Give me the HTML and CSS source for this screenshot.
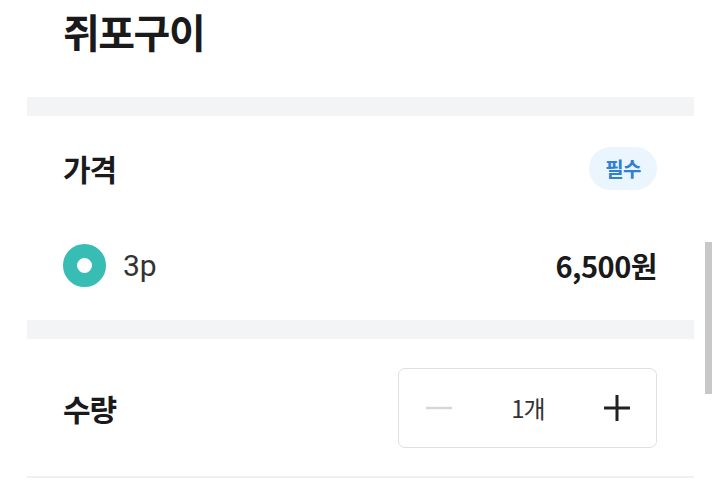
FILE: index.html
```html
<!DOCTYPE html>
<html lang="ko">
<head>
<meta charset="utf-8">
<link rel="stylesheet" href="styles.css">
</head>
<body>
<div class="page">
  <section class="title-section">
    <h1 class="title">쥐포구이</h1>
  </section>
  <div class="band"></div>
  <section class="price-section">
    <div class="row header-row">
      <h2 class="label">가격</h2>
      <span class="pill">필수</span>
    </div>
    <div class="row option-row">
      <div class="option">
        <span class="radio"></span>
        <span class="option-name">3p</span>
      </div>
      <span class="price">6,500원</span>
    </div>
  </section>
  <div class="band"></div>
  <section class="qty-section">
    <div class="row qty-row">
      <h2 class="label">수량</h2>
      <div class="stepper">
        <span class="step minus"><svg width="28" height="28" viewBox="0 0 28 28"><path d="M1 14h26" stroke="#d6d6d6" stroke-width="2.4"/></svg></span>
        <span class="count">1개</span>
        <span class="step plus"><svg width="28" height="28" viewBox="0 0 28 28"><path d="M1 14h26M14 1v26" stroke="#222" stroke-width="3"/></svg></span>
      </div>
    </div>
  </section>
  <div class="divider"></div>
</div>
<div class="scrollbar"></div>
</body>
</html>
```
FILE: styles.css
```css
html, body {
  margin: 0;
  padding: 0;
  background: #fff;
}
body {
  font-family: "Noto Sans CJK KR", "Noto Sans", sans-serif;
  color: #1f1f1f;
  width: 718px;
  height: 492px;
  overflow: hidden;
  position: relative;
}
.page {
  margin: 0 24px 0 27px;
}
.title-section {
  height: 97px;
  padding: 0 36px;
  box-sizing: border-box;
}
.title {
  margin: 0;
  font-size: 40px;
  font-weight: 700;
  letter-spacing: -1.5px;
  line-height: 62px;
  color: #1a1a1a;
}
.band {
  height: 19px;
  background: #f3f4f6;
}
.price-section {
  height: 204px;
  padding: 0 37px 0 36px;
}
.row {
  display: flex;
  align-items: center;
  justify-content: space-between;
}
.header-row {
  height: 104px;
}
.label {
  margin: 0;
  font-size: 30px;
  font-weight: 700;
  letter-spacing: -1px;
  color: #1a1a1a;
}
.pill {
  background: #ebf5fe;
  color: #2f7fd3;
  font-size: 20px;
  font-weight: 700;
  border-radius: 22px;
  padding: 0 16px;
  height: 43px;
  line-height: 43px;
  letter-spacing: -0.5px;
}
.option-row {
  height: 90px;
}
.option {
  display: flex;
  align-items: center;
  gap: 17px;
}
.radio {
  width: 43px;
  height: 43px;
  box-sizing: border-box;
  border-radius: 50%;
  border: 14.5px solid #38bdb5;
  background: #fff;
}
.option-name {
  font-family: "Roboto", "Noto Sans", sans-serif;
  font-size: 30px;
  color: #333;
}
.price {
  font-size: 29px;
  font-weight: 700;
  letter-spacing: -0.5px;
  color: #1a1a1a;
}
.qty-section {
  height: 137px;
  padding: 0 37px 0 36px;
}
.qty-row {
  height: 137px;
}
.stepper {
  width: 259px;
  height: 80px;
  box-sizing: border-box;
  border: 1.5px solid #e0e0e0;
  border-radius: 7px;
  display: flex;
  align-items: center;
  justify-content: space-between;
  padding: 0 25px 0 26px;
}
.step {
  display: flex;
  width: 28px;
  height: 28px;
}
.count {
  font-size: 24px;
  color: #333;
  letter-spacing: -1px;
}
.divider {
  height: 2px;
  background: #f0f0f0;
}
.scrollbar {
  position: absolute;
  left: 705px;
  top: 242px;
  width: 7px;
  height: 152px;
  background: #c8c8c8;
}
```
